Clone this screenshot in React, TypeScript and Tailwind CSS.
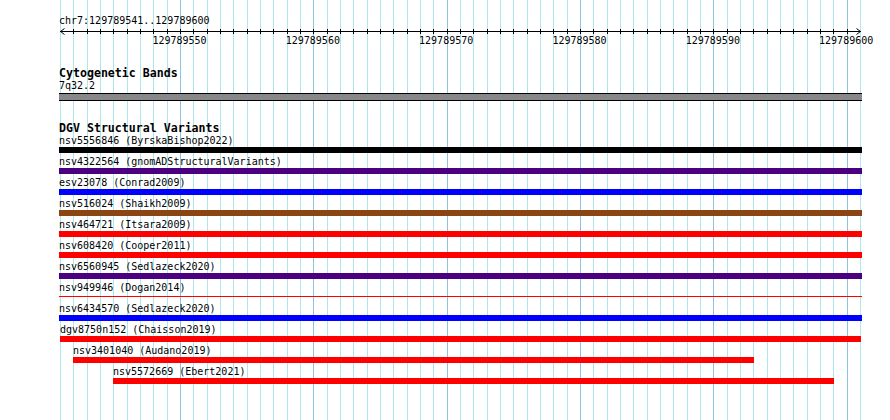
import React from "react";

const STEP = 800 / 60;
const gx = (k: number) => Math.round(60 + k * STEP);

type Row = { label: string; bar: string; wrap: string; thin?: boolean };

const rows: Row[] = [
  { label: "nsv5556846 (ByrskaBishop2022)", bar: "w-[803px] bg-black", wrap: "ml-0" },
  { label: "nsv4322564 (gnomADStructuralVariants)", bar: "w-[803px] bg-[#4b0082]", wrap: "ml-0" },
  { label: "esv23078 (Conrad2009)", bar: "w-[803px] bg-[#0000ff]", wrap: "ml-0" },
  { label: "nsv516024 (Shaikh2009)", bar: "w-[803px] bg-[#8b4513]", wrap: "ml-0" },
  { label: "nsv464721 (Itsara2009)", bar: "w-[803px] bg-[#ff0000]", wrap: "ml-0" },
  { label: "nsv608420 (Cooper2011)", bar: "w-[803px] bg-[#ff0000]", wrap: "ml-0" },
  { label: "nsv6560945 (Sedlazeck2020)", bar: "w-[803px] bg-[#4b0082]", wrap: "ml-0" },
  { label: "nsv949946 (Dogan2014)", bar: "w-[803px] bg-[#ff0000]", wrap: "ml-0", thin: true },
  { label: "nsv6434570 (Sedlazeck2020)", bar: "w-[803px] bg-[#0000ff]", wrap: "ml-0" },
  { label: "dgv8750n152 (Chaisson2019)", bar: "w-[801px] bg-[#ff0000]", wrap: "ml-px" },
  { label: "nsv3401040 (Audano2019)", bar: "w-[681px] bg-[#ff0000]", wrap: "ml-[14px]" },
  { label: "nsv5572669 (Ebert2021)", bar: "w-[721px] bg-[#ff0000]", wrap: "ml-[54px]" },
];

const labels = [9, 19, 29, 39, 49, 59];

export default function App() {
  const ks = Array.from({ length: 61 }, (_, k) => k);
  return (
    <div className="relative w-[890px] h-[420px] overflow-hidden bg-white text-black font-['DejaVu_Sans_Mono','Liberation_Mono',monospace]">
      {/* background grid lines */}
      <svg className="absolute inset-0" width={890} height={420} shapeRendering="crispEdges">
        {ks.map((k) => (
          <rect
            key={k}
            x={gx(k)}
            y={0}
            width={1}
            height={420}
            fill={(k + 1) % 10 === 0 ? "#8ec2e4" : "#aee6ee"}
          />
        ))}
      </svg>

      <div className="relative flex flex-col pt-[16px]">
        {/* ruler */}
        <div className="pl-[59px] h-[12px] text-[10px] leading-[10.5px] whitespace-pre">chr7:129789541..129789600</div>
        <svg width={890} height={18} className="block text-[10px]" shapeRendering="crispEdges">
          <rect x={60} y={3} width={801} height={1} fill="#000" />
          {ks.slice(1, 60).map((k) => (
            <rect key={k} x={gx(k)} y={1} width={1} height={5} fill="#000" />
          ))}
          <path d="M60.5 3.5 L64.5 0.5 M60.5 3.5 L64.5 6.5" stroke="#000" strokeWidth={1} fill="none" shapeRendering="auto" />
          <path d="M860.5 3.5 L856.5 0.5 M860.5 3.5 L856.5 6.5" stroke="#000" strokeWidth={1} fill="none" shapeRendering="auto" />
          {labels.map((k) => (
            <text key={k} x={60 + k * STEP - 0.5} y={16} textAnchor="middle" fill="#000">
              {129789541 + k}
            </text>
          ))}
        </svg>

        {/* Cytogenetic Bands */}
        <div className="mt-[22px] pl-[59px] h-[12px] text-[11.6px] leading-[10px] font-bold whitespace-pre">Cytogenetic Bands</div>
        <div className="mt-px pl-[59px] h-[12px] text-[10px] leading-[10.5px] whitespace-pre">7q32.2</div>
        <div className="ml-[59px] w-[803px] h-[8px] bg-[#888888] border-y border-black" />

        {/* DGV */}
        <div className="mt-[22px] pl-[59px] h-[12px] text-[11.6px] leading-[10px] font-bold whitespace-pre">DGV Structural Variants</div>
        <div className="mt-px pl-[59px] flex flex-col gap-[4px]">
          {rows.map((r) => (
            <div key={r.label} className={`flex flex-col ${r.wrap}`}>
              <div className="h-[11px] text-[10px] leading-[10.5px] whitespace-pre">{r.label}</div>
              {r.thin ? (
                <div className="h-[6px] pt-[2px]">
                  <div className={`h-px ${r.bar}`} />
                </div>
              ) : (
                <div className={`h-[6px] ${r.bar}`} />
              )}
            </div>
          ))}
        </div>
      </div>
    </div>
  );
}
